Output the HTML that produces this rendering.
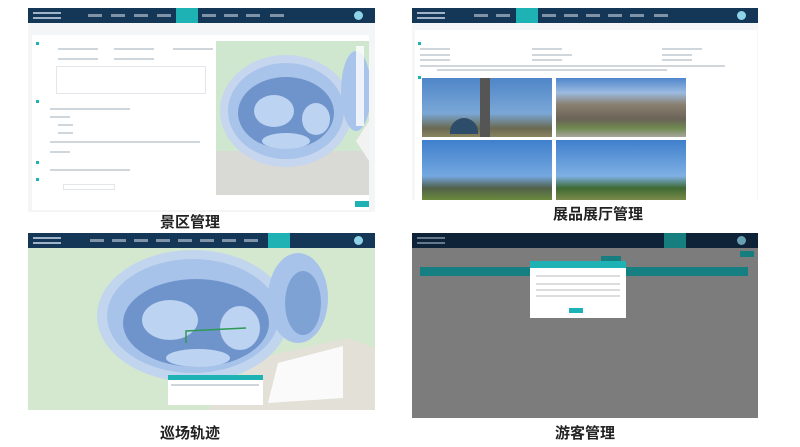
<!DOCTYPE html>
<html><head><meta charset="utf-8"><style>
*{margin:0;padding:0;box-sizing:border-box}
body{width:800px;height:447px;background:#fff;position:relative;overflow:hidden;font-family:"Liberation Sans","Noto Sans CJK SC",sans-serif}
.p{position:absolute;overflow:hidden;background:#fff}
.nav{position:absolute;left:0;top:0;right:0;height:15px;background:#143657}
.nav .t{position:absolute;top:0;height:15px;background:#1fb2b5}
.nav .av{position:absolute;right:12px;top:3px;width:9px;height:9px;border-radius:50%;background:#8fd4e6}
.nav .lg{position:absolute;left:5px;top:4px;width:28px;height:7px;border-top:2px solid #9fb4c8;border-bottom:2px solid #9fb4c8}
.nav .it{position:absolute;top:6px;height:3px;background:#7e93a8}
.cap{position:absolute;font-size:15px;font-weight:bold;color:#222;transform:translateX(-50%);white-space:nowrap;font-family:"Liberation Sans","Noto Sans CJK SC",sans-serif}
.ln{position:absolute;height:2px;background:#cfd6dc}
.dot{position:absolute;width:3px;height:3px;background:#1fb2b5}
</style></head><body>

<!-- top-left -->
<div class="p" style="left:28px;top:8px;width:347px;height:204px;background:#f3f5f7">
 <div class="nav"><div class="lg"></div>
  <div class="it" style="left:60px;width:14px"></div><div class="it" style="left:83px;width:14px"></div><div class="it" style="left:106px;width:14px"></div><div class="it" style="left:129px;width:14px"></div>
  <div class="t" style="left:148px;width:22px"></div>
  <div class="it" style="left:174px;width:14px"></div><div class="it" style="left:196px;width:14px"></div><div class="it" style="left:218px;width:14px"></div><div class="it" style="left:242px;width:14px"></div>
  <div class="av"></div></div>
 <div style="position:absolute;left:4px;top:27px;width:337px;height:175px;background:#fff"></div>
 <div class="dot" style="left:8px;top:34px"></div><div class="ln" style="left:30px;top:40px;width:40px"></div><div class="ln" style="left:86px;top:40px;width:40px"></div><div class="ln" style="left:145px;top:40px;width:40px"></div>
 <div class="ln" style="left:30px;top:50px;width:40px"></div><div class="ln" style="left:86px;top:50px;width:40px"></div>
 <div style="position:absolute;left:28px;top:58px;width:150px;height:28px;border:1px solid #e3e6ea"></div>
 <div class="dot" style="left:8px;top:92px"></div>
 <div class="ln" style="left:22px;top:100px;width:80px"></div><div class="ln" style="left:22px;top:108px;width:20px"></div><div class="ln" style="left:30px;top:116px;width:15px"></div><div class="ln" style="left:30px;top:124px;width:15px"></div><div class="ln" style="left:22px;top:133px;width:150px"></div><div class="ln" style="left:22px;top:143px;width:20px"></div>
 <div class="dot" style="left:8px;top:153px"></div><div class="ln" style="left:22px;top:161px;width:80px"></div>
 <div class="dot" style="left:8px;top:170px"></div><div style="position:absolute;left:35px;top:176px;width:52px;height:6px;border:1px solid #e3e6ea"></div>
 <div style="position:absolute;left:327px;top:193px;width:14px;height:6px;background:#1fb2b5"></div>
 <svg style="position:absolute;left:188px;top:33px" width="153" height="154" viewBox="0 0 153 154">
  <rect width="153" height="154" fill="#cfe6cf"/><rect x="0" y="110" width="153" height="44" fill="#d9d9d6"/>
  <ellipse cx="70" cy="70" rx="66" ry="56" fill="#c6d6ee"/>
  <ellipse cx="70" cy="70" rx="58" ry="48" fill="#a9c4ea"/>
  <ellipse cx="70" cy="72" rx="48" ry="36" fill="#6f94cc"/>
  <ellipse cx="58" cy="70" rx="20" ry="16" fill="#bcd3f1"/><ellipse cx="100" cy="78" rx="14" ry="16" fill="#bcd3f1"/><ellipse cx="70" cy="100" rx="24" ry="8" fill="#bcd3f1"/>
  <ellipse cx="140" cy="50" rx="15" ry="40" fill="#a9c4ea"/><path d="M140 100 L153 80 L153 120Z" fill="#f2f2f2"/>
  <rect x="140" y="5" width="8" height="80" fill="#fff" opacity=".8"/>
 </svg>
</div>
<div class="cap" style="left:190px;top:211px">景区管理</div>

<!-- top-right -->
<div class="p" style="left:412px;top:8px;width:346px;height:192px;background:#f5f6f8">
 <div class="nav"><div class="lg"></div>
  <div class="it" style="left:62px;width:14px"></div><div class="it" style="left:84px;width:14px"></div>
  <div class="t" style="left:104px;width:22px"></div>
  <div class="it" style="left:130px;width:14px"></div><div class="it" style="left:152px;width:14px"></div><div class="it" style="left:174px;width:14px"></div><div class="it" style="left:196px;width:14px"></div><div class="it" style="left:218px;width:14px"></div><div class="it" style="left:242px;width:14px"></div>
  <div class="av"></div></div>
 <div style="position:absolute;left:3px;top:22px;width:342px;height:170px;background:#fff"></div>
 <div class="dot" style="left:6px;top:34px"></div>
 <div class="ln" style="left:8px;top:40px;width:30px"></div><div class="ln" style="left:120px;top:40px;width:30px"></div><div class="ln" style="left:250px;top:40px;width:40px"></div>
 <div class="ln" style="left:8px;top:46px;width:30px"></div><div class="ln" style="left:120px;top:46px;width:40px"></div><div class="ln" style="left:250px;top:46px;width:30px"></div>
 <div class="ln" style="left:8px;top:51px;width:30px"></div><div class="ln" style="left:120px;top:51px;width:30px"></div><div class="ln" style="left:250px;top:51px;width:30px"></div>
 <div class="ln" style="left:8px;top:57px;width:305px"></div><div class="ln" style="left:25px;top:61px;width:230px"></div>
 <div class="dot" style="left:6px;top:68px"></div>
 <div style="position:absolute;left:10px;top:70px;width:130px;height:59px;background:linear-gradient(#4f86c8,#7aa7d6 60%,#6a6a52 85%,#8a8560)"></div>
 <div style="position:absolute;left:68px;top:70px;width:10px;height:59px;background:#555"></div>
 <div style="position:absolute;left:38px;top:110px;width:28px;height:16px;border-radius:14px 14px 0 0;background:#2d4d6a"></div>
 <div style="position:absolute;left:144px;top:70px;width:130px;height:59px;background:linear-gradient(#4f86cc,#9cbbe0 25%,#8a8070 45%,#6b6357 70%,#6f8a50 85%,#a9a69c)"></div>
 <div style="position:absolute;left:10px;top:132px;width:130px;height:60px;background:linear-gradient(#3f7fcc,#74a8e0 60%,#51604a 80%,#6a8a3c)"></div>
 <div style="position:absolute;left:144px;top:132px;width:130px;height:60px;background:linear-gradient(#3f7fcc,#7fb0e4 60%,#3e6a32 80%,#7b8a4a)"></div>
</div>
<div class="cap" style="left:598px;top:203px">展品展厅管理</div>

<!-- bottom-left -->
<div class="p" style="left:28px;top:233px;width:347px;height:177px;background:#d3e8cf">
 <svg style="position:absolute;left:0;top:15px" width="347" height="162" viewBox="0 0 347 162">
  <rect width="347" height="162" fill="#d3e8cf"/>
  <path d="M230 110 L320 90 L347 100 L347 162 L180 162Z" fill="#e3e0d8"/>
  <path d="M250 115 L315 98 L315 150 L240 155Z" fill="#fafafa"/>
  <ellipse cx="165" cy="68" rx="96" ry="66" fill="#c2d5ee"/>
  <ellipse cx="165" cy="68" rx="86" ry="57" fill="#a8c3ea"/>
  <ellipse cx="168" cy="75" rx="73" ry="44" fill="#6f94cc"/>
  <ellipse cx="142" cy="72" rx="28" ry="20" fill="#bcd3f1"/><ellipse cx="212" cy="80" rx="20" ry="22" fill="#bcd3f1"/><ellipse cx="170" cy="110" rx="32" ry="9" fill="#bcd3f1"/>
  <ellipse cx="270" cy="50" rx="30" ry="45" fill="#a8c3ea"/><ellipse cx="275" cy="55" rx="18" ry="32" fill="#7fa2d5"/>
  <polyline points="158,95 158,83 218,80" fill="none" stroke="#2e9a55" stroke-width="1.5"/>
 </svg>
 <div class="nav"><div class="lg"></div>
  <div class="it" style="left:62px;width:14px"></div><div class="it" style="left:84px;width:14px"></div><div class="it" style="left:106px;width:14px"></div><div class="it" style="left:128px;width:14px"></div><div class="it" style="left:150px;width:14px"></div><div class="it" style="left:172px;width:14px"></div><div class="it" style="left:194px;width:14px"></div><div class="it" style="left:216px;width:14px"></div>
  <div class="t" style="left:240px;width:22px"></div>
  <div class="av"></div></div>
 <div style="position:absolute;left:140px;top:142px;width:95px;height:30px;background:#fff"><div style="height:5px;background:#1fb2b5"></div><div class="ln" style="left:3px;top:9px;width:88px"></div></div>
</div>
<div class="cap" style="left:190px;top:422px">巡场轨迹</div>

<!-- bottom-right -->
<div class="p" style="left:412px;top:233px;width:346px;height:185px;background:#7c7c7c">
 <div class="nav" style="background:#0e2238"><div class="lg" style="opacity:.6"></div>
  <div class="t" style="left:252px;width:22px;background:#177e80"></div><div class="av" style="opacity:.7"></div></div>
 <div style="position:absolute;left:8px;top:34px;width:328px;height:9px;background:#167f82"></div>
 <div style="position:absolute;left:189px;top:23px;width:20px;height:6px;background:#177e80"></div>
 <div style="position:absolute;left:328px;top:18px;width:14px;height:6px;background:#177e80"></div>
 <div style="position:absolute;left:118px;top:28px;width:96px;height:57px;background:#fff">
  <div style="height:7px;background:#1fb2b5"></div>
  <div class="ln" style="left:6px;top:14px;width:84px;background:#ddd"></div><div class="ln" style="left:6px;top:22px;width:84px;background:#ddd"></div><div class="ln" style="left:6px;top:28px;width:84px;background:#ddd"></div><div class="ln" style="left:6px;top:34px;width:84px;background:#ddd"></div>
  <div style="position:absolute;left:39px;top:47px;width:14px;height:5px;background:#1fb2b5"></div>
 </div>
</div>
<div class="cap" style="left:585px;top:422px">游客管理</div>
</body></html>
